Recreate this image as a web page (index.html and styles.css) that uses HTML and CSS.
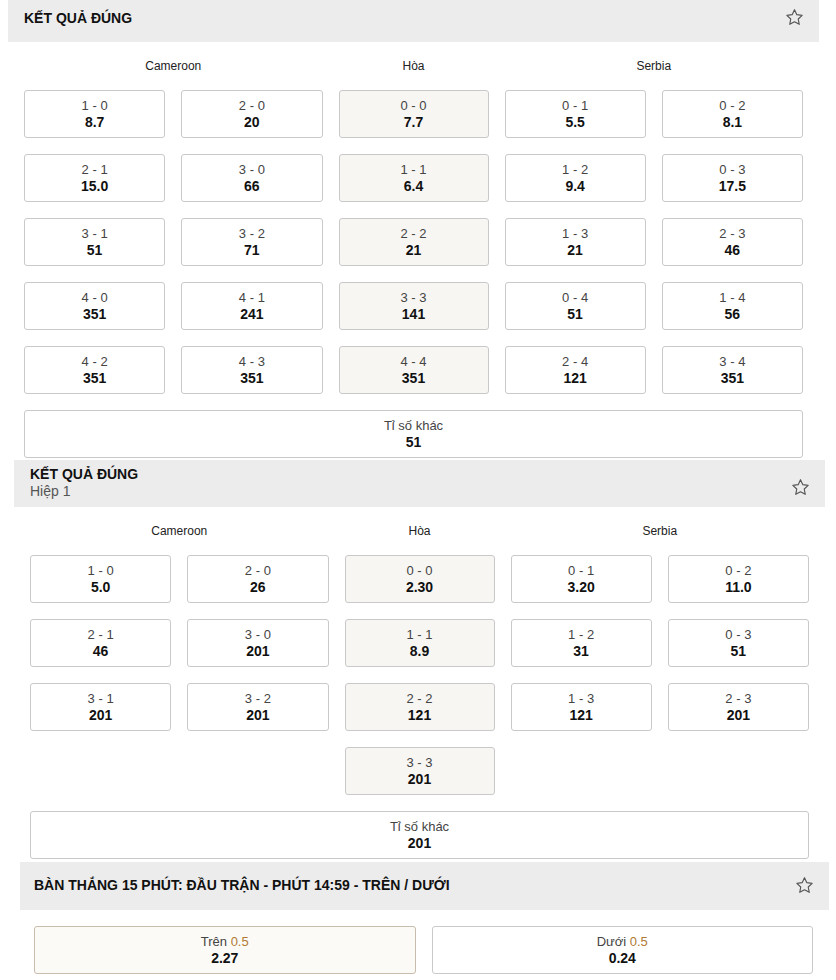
FILE: index.html
```html
<!DOCTYPE html>
<html lang="vi">
<head>
<meta charset="utf-8">
<title>Kết quả đúng</title>
<link rel="stylesheet" href="styles.css">
</head>
<body>
<section class="market m1">
  <header class="mhead">
    <div class="titles"><div class="title">KẾT QUẢ ĐÚNG</div></div>
    <svg class="star" viewBox="0 0 20 20" width="19" height="19"><path d="M10 1.8l2.45 5.2 5.6.7-4.1 3.9 1.05 5.6L10 14.45 4.99 17.2l1.05-5.6-4.1-3.9 5.6-.7z" fill="none" stroke="#555" stroke-width="1.2" stroke-linejoin="round"/></svg>
  </header>
  <div class="mbody">
    <div class="grid labels">
      <div class="lab span2">Cameroon</div>
      <div class="lab">Hòa</div>
      <div class="lab span2">Serbia</div>
    </div>
    <div class="grid odds">
      <button class="btn"><span class="sc">1 - 0</span><b>8.7</b></button>
      <button class="btn"><span class="sc">2 - 0</span><b>20</b></button>
      <button class="btn draw"><span class="sc">0 - 0</span><b>7.7</b></button>
      <button class="btn"><span class="sc">0 - 1</span><b>5.5</b></button>
      <button class="btn"><span class="sc">0 - 2</span><b>8.1</b></button>

      <button class="btn"><span class="sc">2 - 1</span><b>15.0</b></button>
      <button class="btn"><span class="sc">3 - 0</span><b>66</b></button>
      <button class="btn draw"><span class="sc">1 - 1</span><b>6.4</b></button>
      <button class="btn"><span class="sc">1 - 2</span><b>9.4</b></button>
      <button class="btn"><span class="sc">0 - 3</span><b>17.5</b></button>

      <button class="btn"><span class="sc">3 - 1</span><b>51</b></button>
      <button class="btn"><span class="sc">3 - 2</span><b>71</b></button>
      <button class="btn draw"><span class="sc">2 - 2</span><b>21</b></button>
      <button class="btn"><span class="sc">1 - 3</span><b>21</b></button>
      <button class="btn"><span class="sc">2 - 3</span><b>46</b></button>

      <button class="btn"><span class="sc">4 - 0</span><b>351</b></button>
      <button class="btn"><span class="sc">4 - 1</span><b>241</b></button>
      <button class="btn draw"><span class="sc">3 - 3</span><b>141</b></button>
      <button class="btn"><span class="sc">0 - 4</span><b>51</b></button>
      <button class="btn"><span class="sc">1 - 4</span><b>56</b></button>

      <button class="btn"><span class="sc">4 - 2</span><b>351</b></button>
      <button class="btn"><span class="sc">4 - 3</span><b>351</b></button>
      <button class="btn draw"><span class="sc">4 - 4</span><b>351</b></button>
      <button class="btn"><span class="sc">2 - 4</span><b>121</b></button>
      <button class="btn"><span class="sc">3 - 4</span><b>351</b></button>
    </div>
    <button class="btn wide"><span class="sc">Tỉ số khác</span><b>51</b></button>
  </div>
</section>

<section class="market m2">
  <header class="mhead two">
    <div class="titles"><div class="title">KẾT QUẢ ĐÚNG</div><div class="sub">Hiệp 1</div></div>
    <svg class="star" viewBox="0 0 20 20" width="19" height="19"><path d="M10 1.8l2.45 5.2 5.6.7-4.1 3.9 1.05 5.6L10 14.45 4.99 17.2l1.05-5.6-4.1-3.9 5.6-.7z" fill="none" stroke="#555" stroke-width="1.2" stroke-linejoin="round"/></svg>
  </header>
  <div class="mbody">
    <div class="grid labels">
      <div class="lab span2">Cameroon</div>
      <div class="lab">Hòa</div>
      <div class="lab span2">Serbia</div>
    </div>
    <div class="grid odds">
      <button class="btn"><span class="sc">1 - 0</span><b>5.0</b></button>
      <button class="btn"><span class="sc">2 - 0</span><b>26</b></button>
      <button class="btn draw"><span class="sc">0 - 0</span><b>2.30</b></button>
      <button class="btn"><span class="sc">0 - 1</span><b>3.20</b></button>
      <button class="btn"><span class="sc">0 - 2</span><b>11.0</b></button>

      <button class="btn"><span class="sc">2 - 1</span><b>46</b></button>
      <button class="btn"><span class="sc">3 - 0</span><b>201</b></button>
      <button class="btn draw"><span class="sc">1 - 1</span><b>8.9</b></button>
      <button class="btn"><span class="sc">1 - 2</span><b>31</b></button>
      <button class="btn"><span class="sc">0 - 3</span><b>51</b></button>

      <button class="btn"><span class="sc">3 - 1</span><b>201</b></button>
      <button class="btn"><span class="sc">3 - 2</span><b>201</b></button>
      <button class="btn draw"><span class="sc">2 - 2</span><b>121</b></button>
      <button class="btn"><span class="sc">1 - 3</span><b>121</b></button>
      <button class="btn"><span class="sc">2 - 3</span><b>201</b></button>

      <button class="btn draw col3"><span class="sc">3 - 3</span><b>201</b></button>
    </div>
    <button class="btn wide"><span class="sc">Tỉ số khác</span><b>201</b></button>
  </div>
</section>

<section class="market m3">
  <header class="mhead three">
    <div class="titles"><div class="title">BÀN THẮNG 15 PHÚT: ĐẦU TRẬN - PHÚT 14:59 - TRÊN / DƯỚI</div></div>
    <svg class="star" viewBox="0 0 20 20" width="19" height="19"><path d="M10 1.8l2.45 5.2 5.6.7-4.1 3.9 1.05 5.6L10 14.45 4.99 17.2l1.05-5.6-4.1-3.9 5.6-.7z" fill="none" stroke="#555" stroke-width="1.2" stroke-linejoin="round"/></svg>
  </header>
  <div class="mbody ou">
    <button class="btn sel"><span class="sc">Trên <em>0.5</em></span><b>2.27</b></button>
    <button class="btn"><span class="sc">Dưới <em>0.5</em></span><b>0.24</b></button>
  </div>
</section>
</body>
</html>
```

FILE: styles.css
```css
* { box-sizing: border-box; }

html, body {
  margin: 0;
  padding: 0;
  background: #fff;
}

body {
  font-family: "Liberation Sans", Arial, sans-serif;
  color: #111;
}

.market {
  width: 811px;
}

.m1 { margin-left: 8px; margin-bottom: 2px; }
.m2 { margin-left: 14px; margin-bottom: 3px; }
.m3 { margin-left: 20px; width: 809px; }

.mhead {
  background: #ececec;
  display: flex;
  justify-content: space-between;
  align-items: flex-start;
  height: 42px;
  padding: 10px 15px 0 16px;
}

.mhead.two {
  height: 47px;
  padding-top: 6px;
}

.mhead.two .star { margin-top: 12px; }

.mhead.three {
  height: 48px;
  padding: 15px 15px 0 14px;
}

.mhead.three .star { margin-top: -1px; }

.title {
  font-size: 14px;
  font-weight: bold;
  line-height: 17px;
  color: #111;
}

.sub {
  font-size: 14px;
  line-height: 17px;
  color: #555;
}

.star {
  display: block;
  margin-top: -2px;
}

.mbody {
  padding: 0 16px;
}

.grid {
  display: grid;
  grid-template-columns: 1fr 1fr 150px 1fr 1fr;
  column-gap: 16px;
}

.labels {
  padding-top: 16px;
  margin-bottom: 16px;
}

.lab {
  text-align: center;
  font-size: 12px;
  line-height: 16px;
  color: #222;
}

.span2 { grid-column: span 2; }

.odds {
  row-gap: 16px;
}

.col3 { grid-column: 3; }

.btn {
  display: flex;
  flex-direction: column;
  align-items: center;
  justify-content: center;
  height: 48px;
  padding: 0;
  margin: 0;
  border: 1px solid #c9c9c9;
  border-radius: 3px;
  background: #fff;
  font-family: "Liberation Sans", Arial, sans-serif;
  cursor: pointer;
}

.btn .sc {
  font-size: 13px;
  line-height: 16px;
  color: #444;
}

.btn b {
  font-size: 14px;
  line-height: 17px;
  font-weight: bold;
  color: #111;
}

.btn em {
  font-style: normal;
  color: #b07a34;
}

.btn.draw {
  background: #f7f6f3;
}

.btn.wide {
  width: 100%;
  margin-top: 16px;
}

.ou {
  display: grid;
  grid-template-columns: 1fr 1fr;
  column-gap: 16px;
  padding: 16px 16px 0 14px;
}

.btn.sel {
  background: #fcfaf6;
  border-color: #c8bcac;
}
```
